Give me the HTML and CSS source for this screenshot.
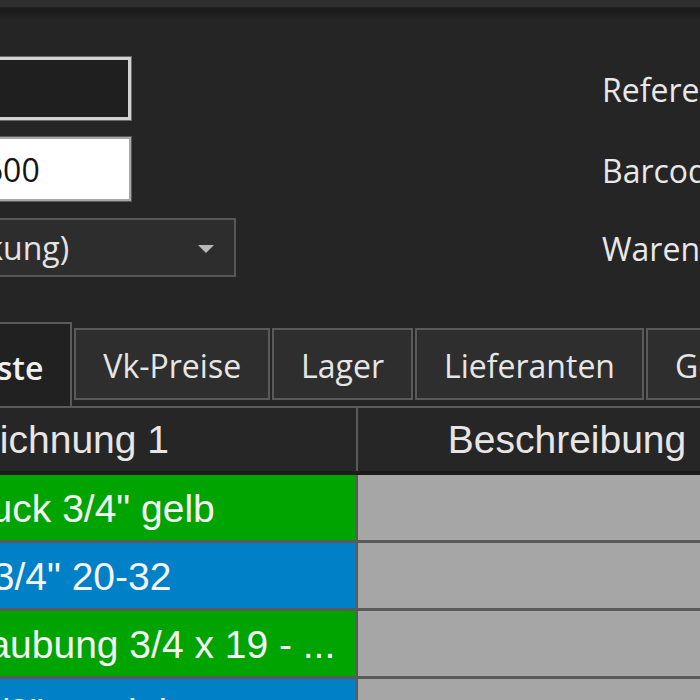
FILE: index.html
```html
<!DOCTYPE html>
<html lang="de">
<head>
<meta charset="utf-8">
<title>Artikel</title>
<link rel="stylesheet" href="styles.css">
</head>
<body>
<div class="topbar"></div>
<div class="form">
  <div class="input input-focus"></div>
  <div class="label">Referenz</div>
  <div class="input input-white">401234600</div>
  <div class="label">Barcode</div>
  <div class="combo"><span class="combo-text">(Verpackung)</span><span class="combo-arrow"></span></div>
  <div class="label">Warengruppe</div>
</div>
<div class="tabs">
  <div class="tab tab-active">Stückliste</div>
  <div class="tab">Vk-Preise</div>
  <div class="tab">Lager</div>
  <div class="tab">Lieferanten</div>
  <div class="tab">Gebinde</div>
</div>
<div class="grid">
  <div class="grid-head">
    <div class="cell c1">Bezeichnung 1</div>
    <div class="cell c2">Beschreibung</div>
  </div>
  <div class="grid-row row-green">
    <div class="cell c1">Gasniederdruck 3/4" gelb</div>
    <div class="cell c2"></div>
  </div>
  <div class="grid-row row-blue">
    <div class="cell c1">Rohrschelle 3/4" 20-32</div>
    <div class="cell c2"></div>
  </div>
  <div class="grid-row row-green">
    <div class="cell c1">Rohrverschraubung 3/4 x 19 - ...</div>
    <div class="cell c2"></div>
  </div>
  <div class="grid-row row-blue">
    <div class="cell c1">Rohrnippel 1/2" verzinkt</div>
    <div class="cell c2"></div>
  </div>
</div>
</body>
</html>
```
FILE: styles.css
```css
html, body {
  margin: 0;
  padding: 0;
  overflow: hidden;
  background: #252525;
  width: 700px;
  height: 700px;
}
body {
  font-family: "Open Sans", "Noto Sans", sans-serif;
  color: #e8e8e8;
}
.topbar {
  height: 20px;
  background: linear-gradient(to bottom, #2f2f2f 0, #2f2f2f 7px, #1b1b1b 8px, #1d1d1d 13px, #252525 20px);
}
.form {
  display: grid;
  grid-template-columns: 367px max-content;
  grid-template-rows: 63px 64px 59px;
  column-gap: 366px;
  row-gap: 17px;
  margin-top: 37px;
  margin-left: -131px;
  width: 1100px;
}
.input {
  width: 262px;
  box-sizing: border-box;
  font-size: 32px;
  display: flex;
  align-items: center;
  white-space: nowrap;
}
.input-focus {
  background: #1f1f1f;
  border: 3px solid #d2d2d2;
  box-shadow: 0 0 0 1px #6a6a6a;
}
.input-white {
  background: #ffffff;
  border: 2px solid #a8a8a8;
  box-shadow: 0 0 0 1px #5a5a5a;
  color: #151515;
  padding-left: 4px;
}
.combo {
  width: 367px;
  box-sizing: border-box;
  background: #2d2d2d;
  border: 2px solid #575757;
  display: flex;
  align-items: center;
  justify-content: space-between;
  padding: 0 20px 0 3px;
  font-size: 32px;
  color: #e4e4e4;
  white-space: nowrap;
}
.combo-arrow {
  width: 0;
  height: 0;
  border-left: 8px solid transparent;
  border-right: 8px solid transparent;
  border-top: 8px solid #b8b8b8;
  margin-top: 2px;
}
.label {
  align-self: center;
  font-size: 32px;
  white-space: nowrap;
  color: #e8e8e8;
  padding-top: 2px;
}
.tabs {
  display: flex;
  align-items: flex-start;
  margin-top: 45px;
  margin-left: -135px;
  height: 84px;
  width: 1200px;
}
.tab {
  box-sizing: border-box;
  height: 72px;
  margin-top: 6px;
  margin-left: 2px;
  padding: 2px 27px 0;
  background: #2e2e2e;
  border: 2px solid #5a5a5a;
  font-size: 32px;
  color: #e6e6e6;
  display: flex;
  align-items: center;
  white-space: nowrap;
}
.tab-active {
  height: 84px;
  margin-top: 0;
  margin-left: 0;
  padding-top: 4px;
  background: #212121;
  border-bottom: none;
  font-weight: 600;
  color: #f0f0f0;
}
.grid {
  margin-left: -276px;
  border-top: 2px solid #5a5a5a;
  width: 1200px;
  font-family: "Liberation Sans", Arial, sans-serif;
  font-size: 39px;
}
.grid-head {
  display: flex;
  height: 67px;
  border-bottom: 4px solid #1c1c1c;
  box-sizing: border-box;
  background: #262626;
  color: #e6e6e6;
}
.grid-head .cell {
  text-align: center;
  line-height: 63px;
}
.cell {
  box-sizing: border-box;
  white-space: nowrap;
  overflow: hidden;
}
.c1 {
  width: 634px;
  border-right: 2px solid #5a5a5a;
}
.c2 {
  width: 418px;
}
.grid-row {
  display: flex;
  height: 68px;
  box-sizing: border-box;
  border-bottom: 3px solid #5a5a5a;
}
.grid-row .c1 {
  padding-left: 52px;
  padding-top: 3px;
  line-height: 62px;
  color: #f4f4f4;
}
.grid-row .c2 {
  background: #a6a6a6;
}
.row-green .c1 {
  background: #00a400;
}
.row-blue .c1 {
  background: #0080c6;
}
```
